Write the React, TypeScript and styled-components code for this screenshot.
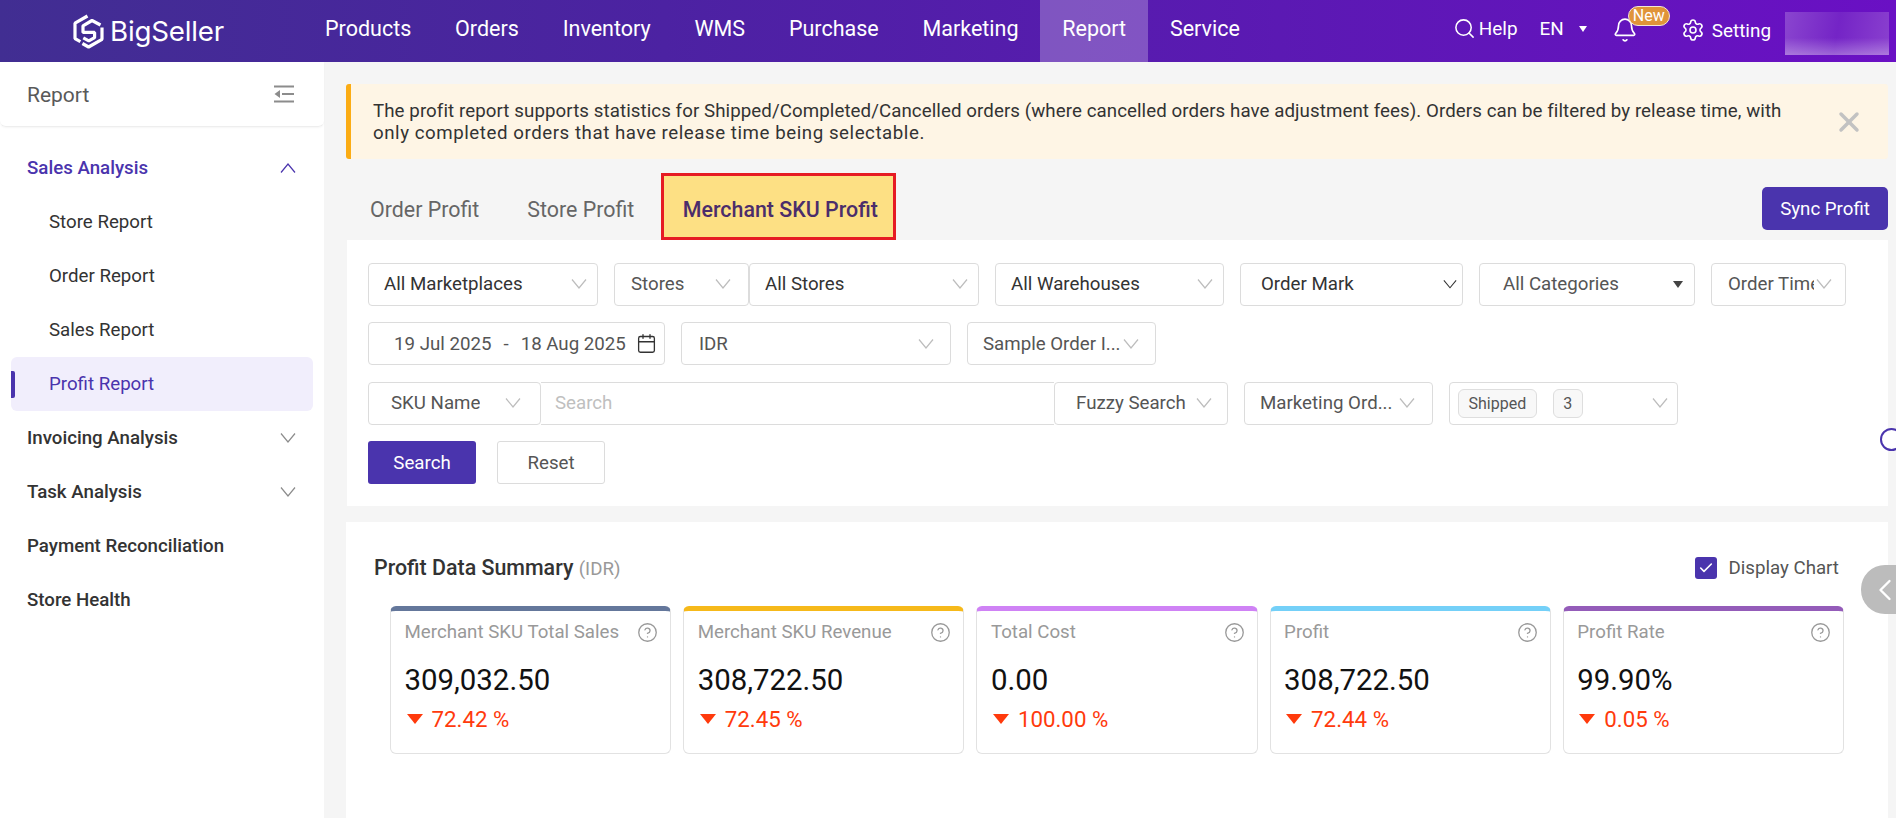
import React from 'react';
import styled, { createGlobalStyle } from 'styled-components';
import { Bell, Calendar, Check, ChevronLeft, CircleHelp, Search, Settings, X } from 'lucide-react';

const GlobalStyle = createGlobalStyle`
	html, body {
		margin: 0;
		height: 100%;
		overflow: hidden;
		background: #f5f5f5;
		font-family: Roboto, "Liberation Sans", sans-serif;
		font-size: 18.7px;
		color: #333;
	}
	* {
		box-sizing: border-box;
	}
`;

const navItems = ['Products', 'Orders', 'Inventory', 'WMS', 'Purchase', 'Marketing', 'Report', 'Service'];

const cards = [
	{ label: 'Merchant SKU Total Sales', value: '309,032.50', delta: '72.42 %', color: '#64779b' },
	{ label: 'Merchant SKU Revenue', value: '308,722.50', delta: '72.45 %', color: '#f6b91a' },
	{ label: 'Total Cost', value: '0.00', delta: '100.00 %', color: '#cf82f5' },
	{ label: 'Profit', value: '308,722.50', delta: '72.44 %', color: '#74d0f8' },
	{ label: 'Profit Rate', value: '99.90%', delta: '0.05 %', color: '#945cb9' },
];

const Chevron = ({ up, size = 16, color = '#bdbdbd' }: { up?: boolean; size?: number; color?: string }) => (
	<svg width={size} height={size * 0.75} viewBox='0 0 16 12' fill='none' style={{ flexShrink: 0 }}>
		<path d={up ? 'M1 10.5 8 2l7 8.5' : 'M1 1.5 8 10l7-8.5'} stroke={color} strokeWidth='1.2' />
	</svg>
);

const Logo = () => (
	<svg width='31' height='35' viewBox='0 0 31 35' fill='none' stroke='#fff' strokeWidth='3.2' strokeLinejoin='bevel'>
		<path d='M14.5 2 2 9.2v15.4l5.4 3.1' />
		<path d='M27.5 11 19 6.5 10 11.8v6.6h11.6v5.2l-5.8 3.3-5.5-3' />
		<path d='M29 13.5v11.8L15.6 33l-6.2-3.5' />
	</svg>
);

const CollapseIcon = () => (
	<svg width='20' height='18' viewBox='0 0 20 18' fill='none'>
		<path d='M0 1.5h20M0 16.5h20M8 9h12' stroke='#8c8c8c' strokeWidth='2' />
		<path d='M6 5v8L0.5 9z' fill='#8c8c8c' />
	</svg>
);

const App = () => {
	return (
		<>
			<GlobalStyle />
			<TopBar>
				<LogoSlot>
					<Logo />
					<LogoText>BigSeller</LogoText>
				</LogoSlot>
				<Nav>
					{navItems.map((item) => (
						<NavItem key={item} $active={item === 'Report'}>
							{item}
						</NavItem>
					))}
				</Nav>
				<TopRight>
					<TopAction>
						<Search size={23} strokeWidth={1.6} />
						Help
					</TopAction>
					<LangAction>
						EN
						<SmallTriangle />
					</LangAction>
					<BellWrap>
						<Bell size={26} strokeWidth={1.5} />
						<NewBadge>New</NewBadge>
					</BellWrap>
					<SettingAction>
						<Settings size={24} strokeWidth={1.6} />
						Setting
					</SettingAction>
					<BlurredUser />
				</TopRight>
			</TopBar>
			<Body>
				<Sidebar>
					<SidebarHead>
						<SidebarTitle>Report</SidebarTitle>
						<CollapseIcon />
					</SidebarHead>
					<Menu>
						<MenuGroup $open>
							Sales Analysis
							<Chevron up color='#4a34ad' />
						</MenuGroup>
						<SubItem>Store Report</SubItem>
						<SubItem>Order Report</SubItem>
						<SubItem>Sales Report</SubItem>
						<SubItem $active>Profit Report</SubItem>
						<MenuGroup>
							Invoicing Analysis
							<Chevron color='#8c8c8c' />
						</MenuGroup>
						<MenuGroup>
							Task Analysis
							<Chevron color='#8c8c8c' />
						</MenuGroup>
						<MenuGroup>Payment Reconciliation</MenuGroup>
						<MenuGroup>Store Health</MenuGroup>
					</Menu>
				</Sidebar>
				<Main>
					<Notice>
						<div>
							<NoticeLine $spacing={0.08}>
								The profit report supports statistics for Shipped/Completed/Cancelled orders (where cancelled orders
								have adjustment fees). Orders can be filtered by release time, with
							</NoticeLine>
							<NoticeLine $spacing={0.55}>only completed orders that have release time being selectable.</NoticeLine>
						</div>
						<NoticeClose>
							<X size={32} strokeWidth={2.6} />
						</NoticeClose>
					</Notice>
					<TabsRow>
						<Tabs>
							<Tab>Order Profit</Tab>
							<Tab>Store Profit</Tab>
							<ActiveTab>Merchant SKU Profit</ActiveTab>
						</Tabs>
						<SyncButton>Sync Profit</SyncButton>
					</TabsRow>
					<FilterPanel>
						<FilterRow>
							<Field $w={230}>
								<FieldText $dark>All Marketplaces</FieldText>
								<Chevron />
							</Field>
							<FieldGroup>
								<Field $w={135} $pad={16} $padR={17}>
									<FieldText>Stores</FieldText>
									<Chevron />
								</Field>
								<Field $w={230}>
									<FieldText $dark>All Stores</FieldText>
									<Chevron />
								</Field>
							</FieldGroup>
							<Field $w={229}>
								<FieldText $dark>All Warehouses</FieldText>
								<Chevron />
							</Field>
							<Field $w={223} $pad={20} $padR={5}>
								<FieldText $dark>Order Mark</FieldText>
								<Chevron size={14} color='#333' />
							</Field>
							<Field $w={216} $pad={23}>
								<FieldText>All Categories</FieldText>
								<DarkTriangle />
							</Field>
							<Field $w={135} $pad={16} $padR={13}>
								<FieldText>Order Time</FieldText>
								<Chevron />
							</Field>
						</FilterRow>
						<FilterRow>
							<Field $w={297} $pad={25} $padR={7}>
								<DateText>
									19 Jul 2025<DateDash>-</DateDash>18 Aug 2025
								</DateText>
								<Calendar size={21} strokeWidth={1.5} color='#333' />
							</Field>
							<Field $w={270} $pad={17} $padR={16}>
								<FieldText>IDR</FieldText>
								<Chevron />
							</Field>
							<Field $w={189} $pad={15} $padR={16}>
								<FieldText>Sample Order I...</FieldText>
								<Chevron />
							</Field>
						</FilterRow>
						<FilterRow>
							<FieldGroup>
								<Field $w={173} $pad={22} $padR={19}>
									<FieldText>SKU Name</FieldText>
									<Chevron />
								</Field>
								<SearchInput placeholder='Search' />
								<Field $w={174} $pad={21} $padR={15}>
									<FieldText>Fuzzy Search</FieldText>
									<Chevron />
								</Field>
							</FieldGroup>
							<Field $w={189} $padR={17}>
								<FieldText>Marketing Ord...</FieldText>
								<Chevron />
							</Field>
							<Field $w={229} $pad={8} $padR={9}>
								<Chips>
									<Chip>Shipped</Chip>
									<Chip>3</Chip>
								</Chips>
								<Chevron />
							</Field>
						</FilterRow>
						<FilterRow>
							<PrimaryButton>Search</PrimaryButton>
							<ResetButton>Reset</ResetButton>
						</FilterRow>
					</FilterPanel>
					<SummaryPanel>
						<SummaryHead>
							<SummaryTitle>
								Profit Data Summary <SummaryUnit>(IDR)</SummaryUnit>
							</SummaryTitle>
							<DisplayChart>
								<CheckBox>
									<Check size={16} strokeWidth={2.4} color='#fff' />
								</CheckBox>
								Display Chart
							</DisplayChart>
						</SummaryHead>
						<CardGrid>
							{cards.map((card) => (
								<Card key={card.label} $bar={card.color}>
									<CardLabelRow>
										{card.label}
										<CircleHelp size={21} strokeWidth={1.5} color='#999' />
									</CardLabelRow>
									<CardValue>{card.value}</CardValue>
									<CardDelta>
										<DownTriangle />
										{card.delta}
									</CardDelta>
								</Card>
							))}
						</CardGrid>
					</SummaryPanel>
				</Main>
			</Body>
			<FloatingRing />
			<FloatingHandle>
				<ChevronLeft size={36} strokeWidth={1.6} color='#fff' />
			</FloatingHandle>
		</>
	);
};

const TopBar = styled.header`
	display: flex;
	height: 62px;
	color: #fff;
	background: linear-gradient(90deg, #412e92 0%, #4c22a2 35%, #6a10c4 100%);
`;

const LogoSlot = styled.div`
	display: flex;
	align-items: center;
	gap: 6px;
	width: 303px;
	padding-left: 73px;
`;

const LogoText = styled.span`
	font-family: Inter, sans-serif;
	font-size: 27.7px;
	letter-spacing: -0.2px;
`;

const Nav = styled.nav`
	display: flex;
`;

const NavItem = styled.div<{ $active?: boolean }>`
	display: flex;
	align-items: center;
	height: 62px;
	padding: 0 21.8px 6px 22px;
	font-size: 21.5px;
	background: ${(props) => (props.$active ? 'rgba(255, 255, 255, 0.25)' : 'transparent')};
`;

const TopRight = styled.div`
	display: flex;
	align-items: center;
	margin-left: auto;
	padding-right: 7px;
	font-size: 18.9px;
`;

const TopAction = styled.div`
	display: flex;
	align-items: center;
	gap: 3px;
	padding-bottom: 6px;
`;

const LangAction = styled.div`
	display: flex;
	align-items: center;
	gap: 15px;
	margin-left: 22px;
	padding-bottom: 6px;
`;

const SmallTriangle = styled.span`
	width: 0;
	height: 0;
	border-left: 4px solid transparent;
	border-right: 4px solid transparent;
	border-top: 6px solid #fff;
	margin-top: 2px;
`;

const BellWrap = styled.div`
	position: relative;
	display: flex;
	margin-left: 25px;
	padding-bottom: 2px;
`;

const NewBadge = styled.span`
	position: absolute;
	left: 16px;
	top: -11px;
	height: 20px;
	width: 42px;
	border: 1px solid #f3e6d4;
	border-radius: 10px;
	background: #e09439;
	font-size: 16px;
	line-height: 17px;
	text-align: center;
`;

const SettingAction = styled.div`
	display: flex;
	align-items: center;
	gap: 7px;
	margin-left: 43px;
	margin-right: 14px;
	padding-bottom: 2px;
`;

const BlurredUser = styled.div`
	width: 104px;
	height: 43px;
	margin-top: 4px;
	background:
		linear-gradient(180deg, rgba(255, 255, 255, 0) 60%, rgba(255, 255, 255, 0.3) 100%),
		linear-gradient(100deg, #8a45cf 0%, #7424c6 50%, #8a40cf 100%);
`;

const Body = styled.div`
	display: flex;
	height: 756px;
`;

const Sidebar = styled.aside`
	width: 324px;
	flex-shrink: 0;
	background: #fff;
`;

const SidebarHead = styled.div`
	display: flex;
	align-items: center;
	justify-content: space-between;
	height: 65px;
	padding: 0 30px 1px 27px;
	border-bottom: 1px solid #eee;
	border-radius: 0 0 6px 6px;
	box-shadow: 0 1px 2px rgba(0, 0, 0, 0.04);
`;

const SidebarTitle = styled.span`
	padding-top: 3px;
	font-size: 21px;
	color: #595959;
`;

const Menu = styled.div`
	padding-top: 14px;
`;

const MenuGroup = styled.div<{ $open?: boolean }>`
	display: flex;
	align-items: center;
	justify-content: space-between;
	height: 54px;
	padding: 0 28px 0 27px;
	font-weight: 500;
	color: ${(props) => (props.$open ? '#4a34ad' : '#333')};
`;

const SubItem = styled.div<{ $active?: boolean }>`
	position: relative;
	display: flex;
	align-items: center;
	height: 54px;
	margin: 0 11px;
	padding-left: 38px;
	border-radius: 6px;
	color: ${(props) => (props.$active ? '#4a34ad' : '#333')};
	background: ${(props) => (props.$active ? '#f1eefc' : 'transparent')};

	${(props) =>
		props.$active &&
		`
		&::before {
			content: '';
			position: absolute;
			left: 0;
			top: 14px;
			width: 4px;
			height: 27px;
			border-radius: 0 2px 2px 0;
			background: #4a34ad;
		}
	`}
`;

const Main = styled.main`
	flex: 1;
	min-width: 0;
	padding: 22px 8px 0 22px;
`;

const Notice = styled.div`
	display: flex;
	align-items: center;
	justify-content: space-between;
	height: 75px;
	padding: 0 23px 0 22px;
	border-left: 5px solid #fbac14;
	border-radius: 3px;
	background: #fef5e5;
`;

const NoticeLine = styled.div<{ $spacing: number }>`
	line-height: 22px;
	white-space: nowrap;
	letter-spacing: ${(props) => props.$spacing}px;
`;

const NoticeClose = styled.div`
	display: flex;
	color: #c2c2c2;
`;

const TabsRow = styled.div`
	display: flex;
	justify-content: space-between;
	height: 67px;
	margin-top: 14px;
`;

const Tabs = styled.div`
	display: flex;
	align-items: stretch;
`;

const Tab = styled.div`
	display: flex;
	align-items: center;
	padding: 5px 24px 0;
	font-size: 21.4px;
	color: #666;
`;

const ActiveTab = styled.div`
	display: flex;
	align-items: center;
	margin-left: 3px;
	padding: 5px 15px 0 18.5px;
	border: 3px solid #e61b23;
	font-size: 21.4px;
	font-weight: 500;
	color: #4b2d6b;
	background: #fde084;
`;

const SyncButton = styled.button`
	align-self: flex-end;
	width: 126px;
	height: 43px;
	margin-bottom: 10px;
	border: 0;
	border-radius: 5px;
	font: inherit;
	color: #fff;
	background: #4a34ad;
`;

const FilterPanel = styled.section`
	display: flex;
	flex-direction: column;
	gap: 16.5px;
	margin-left: 1px;
	height: 266px;
	padding: 22.5px 21px 0;
	background: #fff;
`;

const FilterRow = styled.div`
	display: flex;
	gap: 16px;
`;

const FieldGroup = styled.div`
	display: flex;
`;

const Field = styled.div<{ $w: number; $pad?: number; $padR?: number }>`
	display: flex;
	align-items: center;
	justify-content: space-between;
	gap: 2px;
	width: ${(props) => props.$w}px;
	height: 43px;
	padding: 0 ${(props) => props.$padR ?? 10}px 0 ${(props) => props.$pad ?? 15}px;
	border: 1px solid #dcdcdc;
	border-radius: 4px;
	background: #fff;
`;

const FieldText = styled.span<{ $dark?: boolean }>`
	overflow: hidden;
	white-space: nowrap;
	color: ${(props) => (props.$dark ? '#333' : '#555')};
`;

const DarkTriangle = styled.span`
	width: 0;
	height: 0;
	margin-right: 1px;
	border-left: 5.5px solid transparent;
	border-right: 5.5px solid transparent;
	border-top: 7px solid #444;
`;

const DateText = styled.span`
	white-space: nowrap;
	color: #555;
`;

const DateDash = styled.span`
	margin: 0 12px;
`;

const SearchInput = styled.input`
	width: 513px;
	height: 43px;
	padding: 0 14px;
	border: 1px solid #dcdcdc;
	border-left: 0;
	border-right: 0;
	outline: none;
	font: inherit;
	color: #333;

	&::placeholder {
		color: #bfbfbf;
	}
`;

const Chips = styled.div`
	display: flex;
	align-items: center;
	gap: 16px;
`;

const Chip = styled.span`
	display: flex;
	align-items: center;
	height: 29px;
	padding: 0 9.5px;
	border: 1px solid #dedede;
	border-radius: 6px;
	font-size: 16px;
	color: #555;
	background: #f8f8f8;
`;

const PrimaryButton = styled.button`
	width: 108px;
	height: 43px;
	border: 0;
	border-radius: 3px;
	font: inherit;
	color: #fff;
	background: #4a34ad;
`;

const ResetButton = styled.button`
	width: 108px;
	height: 43px;
	margin-left: 5px;
	border: 1px solid #dcdcdc;
	border-radius: 3px;
	font: inherit;
	color: #555;
	background: #fff;
`;

const SummaryPanel = styled.section`
	height: 296px;
	margin-top: 16px;
	padding: 0 44px;
	background: #fff;
`;

const SummaryHead = styled.div`
	display: flex;
	align-items: center;
	justify-content: space-between;
	height: 84px;
	margin: 0 5px 0 -16px;
	padding-top: 7px;
`;

const SummaryTitle = styled.div`
	font-size: 21.4px;
	font-weight: 500;
`;

const SummaryUnit = styled.span`
	font-size: 18.7px;
	font-weight: 400;
	color: #999;
`;

const DisplayChart = styled.div`
	display: flex;
	align-items: center;
	gap: 11px;
	color: #555;
`;

const CheckBox = styled.span`
	display: flex;
	align-items: center;
	justify-content: center;
	width: 22px;
	height: 22px;
	border-radius: 3px;
	background: #4a34ad;
`;

const CardGrid = styled.div`
	display: grid;
	grid-template-columns: repeat(5, 1fr);
	gap: 12px;
`;

const Card = styled.div<{ $bar: string }>`
	height: 148px;
	padding: 6px 12px 0 13.5px;
	border: 1px solid #e2e2e2;
	border-top: 5px solid ${(props) => props.$bar};
	border-radius: 6px;
`;

const CardLabelRow = styled.div`
	display: flex;
	align-items: center;
	justify-content: space-between;
	height: 30px;
	color: #999;
`;

const CardValue = styled.div`
	margin-top: 15px;
	font-size: 29.4px;
	line-height: 36px;
	color: #111;
`;

const CardDelta = styled.div`
	display: flex;
	align-items: center;
	gap: 9px;
	margin-top: 8px;
	font-size: 22.3px;
	line-height: 26px;
	color: #ff3a0c;
`;

const DownTriangle = styled.span`
	width: 0;
	height: 0;
	margin-left: 2px;
	border-left: 8px solid transparent;
	border-right: 8px solid transparent;
	border-top: 10px solid #ff3a0c;
`;

const FloatingRing = styled.div`
	position: fixed;
	left: 1880px;
	top: 428px;
	width: 23px;
	height: 23px;
	border: 2px solid #4a34ad;
	border-radius: 50%;
	background: #fff;
`;

const FloatingHandle = styled.div`
	position: fixed;
	right: 0;
	top: 565px;
	display: flex;
	align-items: center;
	justify-content: flex-end;
	width: 35px;
	height: 49px;
	overflow: hidden;
	border-radius: 24px 0 0 24px;
	background: #bcbcbc;

	svg {
		flex-shrink: 0;
		margin-right: -7px;
	}
`;

export default App;
